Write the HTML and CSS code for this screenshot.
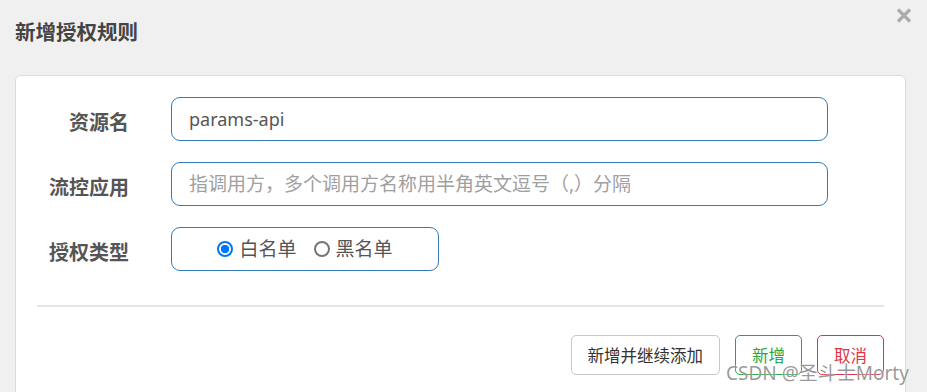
FILE: index.html
```html
<!DOCTYPE html>
<html>
<head>
<meta charset="utf-8">
<link rel="stylesheet" href="styles.css">
</head>
<body>

<div class="modal">
<div class="modal-head">
<h1>新增授权规则</h1>
<svg class="close" width="16" height="15" viewBox="0 0 16 15">
<path d="M2 1.5 L14 13.5 M14 1.5 L2 13.5" stroke="#ababab" stroke-width="3.2" stroke-linecap="butt"/>
</svg>
</div>

<div class="card">
<div class="form-row">
<label>资源名</label>
<div class="field latin">params-api</div>
</div>
<div class="form-row">
<label>流控应用</label>
<div class="field placeholder">指调用方，多个调用方名称用半角英文逗号（,）分隔</div>
</div>
<div class="form-row">
<label>授权类型</label>
<div class="field radio-box">
<span class="radio checked"></span><span class="radio-text">白名单</span>
<span class="radio"></span><span class="radio-text">黑名单</span>
</div>
</div>

<hr class="divider">

<div class="buttons">
<button class="btn">新增并继续添加</button>
<button class="btn btn-green">新增</button>
<button class="btn btn-red">取消</button>
</div>
</div>
</div>

<div class="watermark">CSDN @圣斗士Morty</div>

</body>
</html>
```

FILE: styles.css
```css
body {
margin: 0;
background-color: #f0f0f0;
font-family: "Noto Sans", "Noto Sans CJK SC", sans-serif;
color: #555;
height: 392px;
overflow: hidden;
}
.modal {
padding: 0 21px 0 15px;
}
.modal-head {
display: flex;
justify-content: space-between;
height: 75px;
}
.modal-head h1 {
margin: 0;
padding-top: 17px;
font-size: 20.5px;
font-weight: bold;
color: #444;
line-height: 30px;
}
.close {
margin-top: 8px;
margin-right: -6px;
}
.card {
background-color: #fff;
border: 1px solid #dcdcdc;
border-radius: 6px;
padding: 21px 21px 30px 21px;
height: 330px;
}
.form-row {
display: grid;
grid-template-columns: 92px 657px;
column-gap: 42px;
align-items: center;
margin-bottom: 21px;
}
.form-row label {
text-align: right;
font-size: 20px;
font-weight: bold;
color: #555;
padding-top: 4px;
}
.field {
height: 42px;
border: 1px solid #337ab7;
border-radius: 9px;
padding: 0 17px;
font-size: 19px;
line-height: 42px;
color: #555;
}
.latin {
font-size: 18px;
}
.placeholder {
color: #a0a0a0;
}
.radio-box {
width: 232px;
display: flex;
align-items: center;
justify-content: center;
}
.radio {
width: 12px;
height: 12px;
border: 2px solid #767676;
border-radius: 50%;
margin-right: 6px;
}
.radio.checked {
border-color: #0075ff;
background: radial-gradient(circle, #0075ff 0 4px, #fff 4.5px);
}
.radio-text {
margin-right: 17px;
}
.radio-text:last-child {
margin-right: 0;
}
.divider {
border: none;
border-top: 2px solid #e5e5e5;
margin: 34px 0 28px 0;
}
.buttons {
display: flex;
justify-content: flex-end;
gap: 15px;
}
.btn {
height: 40px;
padding: 0 16px;
background-color: #fff;
border: 1px solid #c8c8c8;
border-radius: 5px;
font-family: "Noto Sans CJK SC", sans-serif;
font-size: 16.5px;
color: #333;
}
.btn-green {
border-color: #28a745;
color: #28a745;
}
.btn-red {
border-color: #dc3545;
color: #dc3545;
}
.watermark {
position: absolute;
left: 726px;
top: 358px;
font-size: 19px;
color: rgba(120, 120, 120, 0.75);
text-shadow: 0 0 2px #fff;
font-family: "Noto Sans", "Noto Sans CJK SC", sans-serif;
}
```
